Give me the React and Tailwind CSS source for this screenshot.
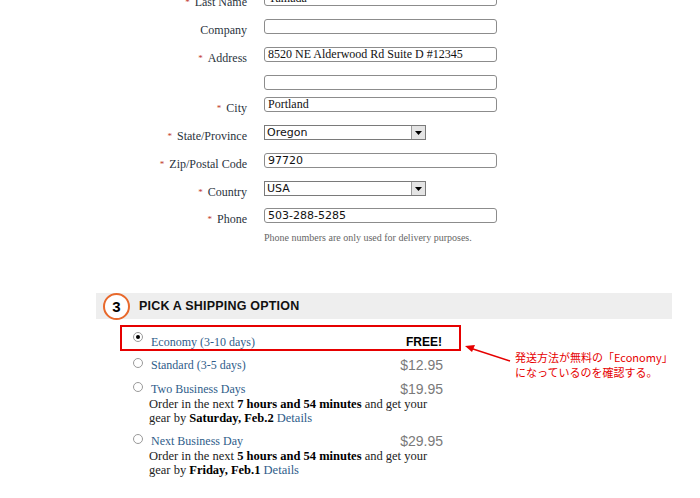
import React from "react";

const serif = { fontFamily: '"Liberation Serif", "Times New Roman", serif' };

function Label({ text, required }) {
  return (
    <div
      className="w-[247px] shrink-0 text-right text-[12px] leading-[15px] mt-[4px] text-[#2a333d]"
      style={serif}
    >
      {required && <span className="text-[#c0392b] text-[9px] align-top mr-[5px]">*</span>}
      {text}
    </div>
  );
}

function TextBox({ value, sans }) {
  return (
    <div
      className="w-[233px] h-[15px] border border-[#8c8c8c] rounded-[3px] bg-white px-[3px] text-[12px] leading-[13px] text-[#111] whitespace-nowrap overflow-hidden"
      style={sans ? { fontFamily: '"DejaVu Sans", sans-serif', fontSize: 11 } : serif}
    >
      {value}
    </div>
  );
}

function SelectBox({ value }) {
  return (
    <div className="w-[162px] h-[15px] flex border border-[#7a7a7a] bg-white">
      <div
        className="flex-1 px-[2px] text-[11px] leading-[13px] text-[#111]"
        style={{ fontFamily: '"DejaVu Sans", sans-serif' }}
      >
        {value}
      </div>
      <div className="w-[14px] h-full bg-[#e4e4e4] border-l border-[#9a9a9a] flex items-center justify-center">
        <svg width="7" height="4" viewBox="0 0 7 4">
          <path d="M0 0 L7 0 L3.5 4 Z" fill="#000" />
        </svg>
      </div>
    </div>
  );
}

function Row({ label, required, children, h }) {
  return (
    <div className={`flex items-start gap-[17px] ${h}`}>
      <Label text={label} required={required} />
      {children}
    </div>
  );
}

function Radio({ checked }) {
  return (
    <span className="w-[10px] h-[10px] shrink-0 rounded-full border border-[#9a9a9a] bg-white flex items-center justify-center">
      {checked && <span className="w-[4px] h-[4px] rounded-full bg-black" />}
    </span>
  );
}

function Price({ children }) {
  return (
    <span
      className="ml-auto text-[14px] leading-[16px] text-[#7a7a7a]"
      style={{ fontFamily: '"Liberation Sans", Arial, sans-serif' }}
    >
      {children}
    </span>
  );
}

export default function App() {
  const options = [
    {
      name: "Standard (3-5 days)",
      price: "$12.95",
    },
    {
      name: "Two Business Days",
      price: "$19.95",
      time: "7 hours and 54 minutes",
      day: "Saturday, Feb.2",
    },
    {
      name: "Next Business Day",
      price: "$29.95",
      time: "5 hours and 54 minutes",
      day: "Friday, Feb.1",
    },
  ];

  return (
    <div className="w-[700px] h-[498px] overflow-hidden bg-white relative">
      {/* Address form */}
      <div className="mt-[-9px]">
        <Row label="Last Name" required h="h-[28px]">
          <TextBox value="Yamada" />
        </Row>
        <Row label="Company" h="h-[28px]">
          <TextBox value="" />
        </Row>
        <Row label="Address" required h="h-[28px]">
          <TextBox value="8520 NE Alderwood Rd Suite D #12345" />
        </Row>
        <Row label="" h="h-[22px]">
          <TextBox value="" />
        </Row>
        <Row label="City" required h="h-[28px]">
          <TextBox value="Portland" />
        </Row>
        <Row label="State/Province" required h="h-[28px]">
          <SelectBox value="Oregon" />
        </Row>
        <Row label="Zip/Postal Code" required h="h-[28px]">
          <TextBox value="97720" sans />
        </Row>
        <Row label="Country" required h="h-[27px]">
          <SelectBox value="USA" />
        </Row>
        <Row label="Phone" required h="h-[24px]">
          <TextBox value="503-288-5285" sans />
        </Row>
        <div className="ml-[264px] text-[10px] leading-[12px] text-[#666]" style={serif}>
          Phone numbers are only used for delivery purposes.
        </div>
      </div>

      {/* Shipping header */}
      <div className="mt-[49px] ml-[96px] w-[576px] h-[26px] bg-[#eeeeee] flex items-center">
        <div className="ml-[7px] w-[27px] h-[27px] rounded-full border-2 border-[#e8692c] bg-white flex items-center justify-center">
          <span
            className="text-[15px] font-bold leading-none text-black"
            style={{ fontFamily: '"Liberation Sans", Arial, sans-serif' }}
          >
            3
          </span>
        </div>
        <span
          className="ml-[9px] text-[12.5px] font-bold text-[#111] tracking-[0.2px]"
          style={{ fontFamily: '"Liberation Sans", Arial, sans-serif' }}
        >
          PICK A SHIPPING OPTION
        </span>
      </div>

      {/* Options */}
      <div className="ml-[120px] mt-[6px] w-[341px]" style={serif}>
        <div className="h-[26px] border-2 border-[#e60000] flex items-start pl-[11px] pr-[17px]">
          <span className="mt-[5px]">
            <Radio checked />
          </span>
          <span className="ml-[8px] mt-[7px] text-[12px] leading-[16px] text-[#2f5d8a]">
            Economy (3-10 days)
          </span>
          <span
            className="ml-auto mt-[7px] text-[12px] leading-[16px] font-bold text-black"
            style={{ fontFamily: '"Liberation Sans", Arial, sans-serif' }}
          >
            FREE!
          </span>
        </div>

        {options.map((o, i) => (
          <div key={o.name} className={`pl-[13px] pr-[18px] ${i === 0 ? "mt-[6px]" : "mt-[8px]"}`}>
            <div className="flex items-start h-[16px]">
              <span className="mt-[1px]">
                <Radio />
              </span>
              <span className="ml-[8px] text-[12px] leading-[16px] text-[#2f5d8a]">{o.name}</span>
              <Price>{o.price}</Price>
            </div>
            {o.time && (
              <p className="ml-[16px] text-[12.5px] leading-[14px] text-[#222]">
                Order in the next <b className="text-black">{o.time}</b> and get your gear by{" "}
                <b className="text-black">{o.day}</b>{" "}
                <span className="text-[#2f5d8a]">Details</span>
              </p>
            )}
          </div>
        ))}
      </div>

      {/* Annotation */}
      <svg className="absolute left-[462px] top-[340px]" width="52" height="24" viewBox="0 0 52 24">
        <line x1="8" y1="8" x2="48" y2="21" stroke="#e60000" strokeWidth="1.5" />
        <path d="M3 6 L13 5 L10 12 Z" fill="#e60000" />
      </svg>
      <div
        className="absolute left-[515px] top-[350px] text-[11px] leading-[15px] text-[#e60000]"
        style={{ fontFamily: '"Noto Sans CJK JP", sans-serif' }}
      >
        <div>発送方法が無料の「Economy」</div>
        <div>になっているのを確認する。</div>
      </div>
    </div>
  );
}
